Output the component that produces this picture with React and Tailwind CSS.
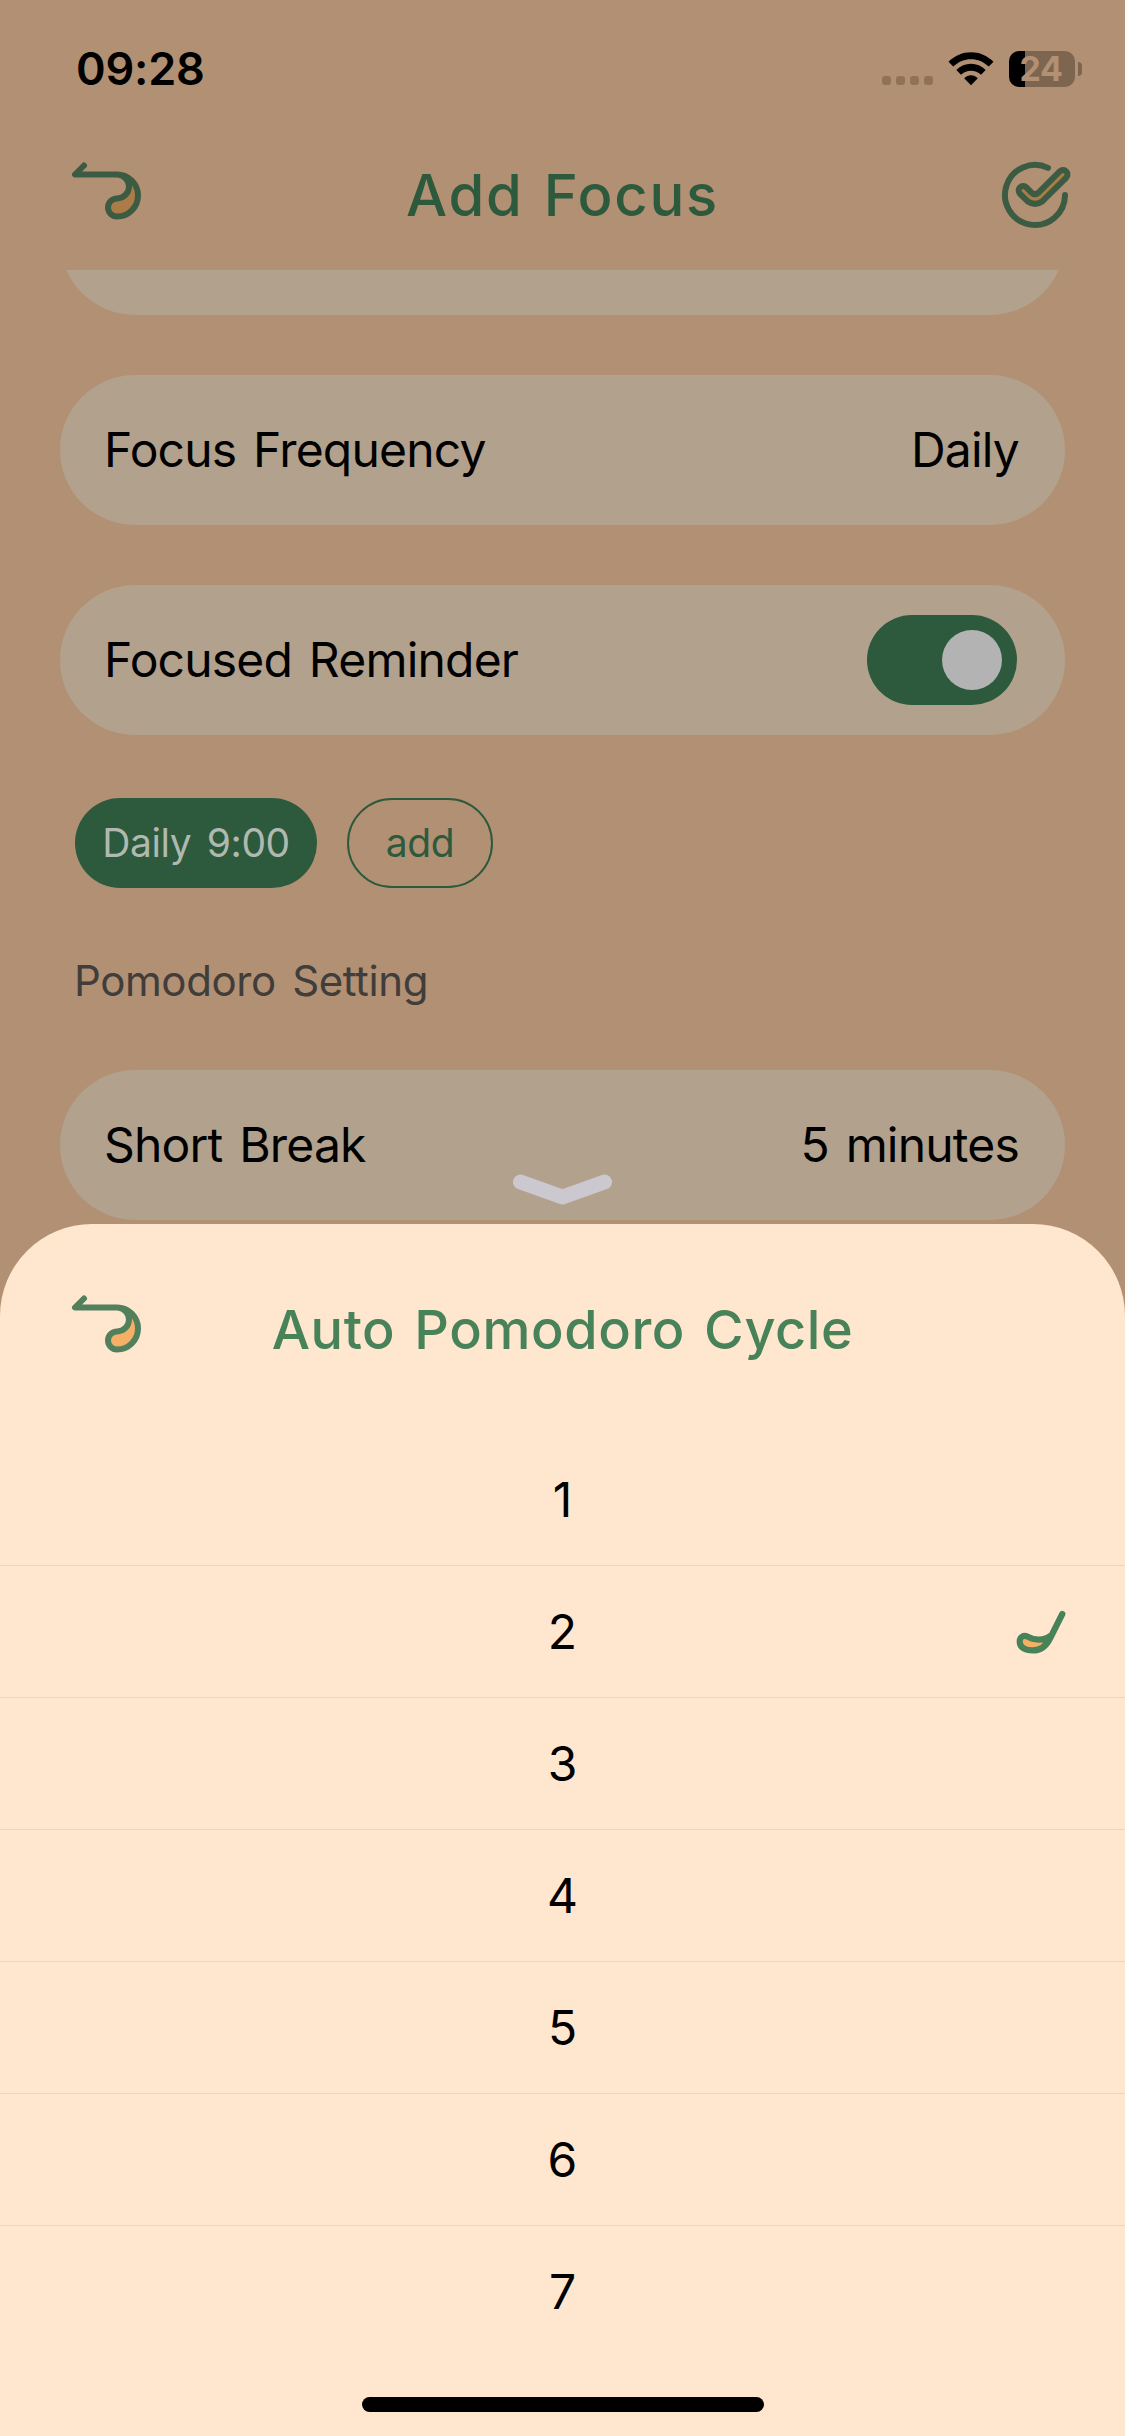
const CYCLES = [1, 2, 3, 4, 5, 6, 7];

function BackIcon({ stroke = '#52805c', fill = '#f5b066' }) {
  return (
    <svg className="h-[60px] w-[72px]" viewBox="0 0 72 60" fill="none">
      <path d="M47 13.5A21 21 0 0 1 47 55.5A9 9 0 0 1 47 37.5A12 12 0 0 0 47 13.5Z" fill={fill} />
      <path
        d="M14 4.5L5 13.5H47A21 21 0 0 1 47 55.5A9 9 0 0 1 47 37.5A12 12 0 0 0 47 13.5"
        stroke={stroke}
        strokeWidth="6"
        strokeLinecap="round"
        strokeLinejoin="round"
      />
    </svg>
  );
}

function ConfirmIcon() {
  return (
    <svg className="-mt-[2px] size-[72px]" viewBox="0 0 72 72" fill="none" stroke="#3b5c43" strokeWidth="6" strokeLinecap="round" strokeLinejoin="round">
      <path d="M66 36A30 30 0 1 1 49 8.9" />
      <path
        d="M61 12.2A4.5 4.5 0 0 1 67.3 18.6L43.5 42.2Q36 47.5 28.5 42.2L21 34.8A4.5 4.5 0 0 1 27.4 28.4L32 33.2Q36 37 40 33.2Z"
        fill="#ac7c48"
      />
    </svg>
  );
}

function SelectedIcon() {
  return (
    <svg className="h-[48px] w-[54px]" viewBox="0 0 54 48" fill="none">
      <path
        d="M48.3 6L36 30.5C32 38.5 27 42.4 19 42.4C10 42.4 5.7 39 5.7 33.5C5.7 29 9.5 27 13 28.4C20 32.5 30 33 37 27.5"
        fill="#f5b066"
        stroke="#478259"
        strokeWidth="6.2"
        strokeLinecap="round"
        strokeLinejoin="round"
      />
    </svg>
  );
}

function StatusBar() {
  return (
    <div className="flex h-[138px] items-center justify-between pr-[43px] pl-[76px]">
      <span className="text-[45px] font-semibold tracking-[-0.2px]">09:28</span>
      <div className="flex h-[36px] items-center">
        <div className="mt-[23px] flex gap-[5px]">
          {[0, 1, 2, 3].map((dot) => (
            <span key={dot} className="size-[9px] rounded-[3px] bg-[#917354]" />
          ))}
        </div>
        <svg className="ml-[15px] h-[34px] w-[46px]" viewBox="0 0 46 34">
          <path d="M0.5 9.8C13 -3 33 -3 45.5 9.8L40.8 14.6C30.5 4.8 15.5 4.8 5.2 14.6Z" />
          <path d="M8.3 18C16.5 9.7 29.5 9.7 37.7 18L33 22.7C27.3 17.3 18.7 17.3 13 22.7Z" />
          <path d="M16.2 26.2C20 22.3 26 22.3 29.8 26.2L23 33.2Z" />
        </svg>
        <div className="ml-[15px] flex h-[36px] w-[66px] items-center justify-center rounded-[10px] bg-linear-to-r from-black from-[16px] to-[#7d6550] to-[16px] pr-[2px] text-[34px] leading-[36px] font-bold tracking-[-0.5px] text-[#b29073]">
          24
        </div>
        <div className="ml-[3px] h-[14px] w-[4px] rounded-r-full bg-[#7d6550]" />
      </div>
    </div>
  );
}

function SettingCard({ label, children }) {
  return (
    <div className="mx-[60px] flex h-[150px] items-center justify-between rounded-full bg-[#b2a18d] pr-[46px] pl-[44px] text-[48px] tracking-[-0.8px] text-black [word-spacing:4px]">
      <span>{label}</span>
      {children}
    </div>
  );
}

function FocusScreen() {
  return (
    <div className="h-[1224px] text-black">
      <StatusBar />
      <header className="flex h-[132px] items-center justify-between px-[54px] pb-[17px]">
        <div className="mb-[10px] ml-[16px] w-[72px]">
          <BackIcon stroke="#3b5c43" fill="#ac7c48" />
        </div>
        <h1 className="mr-[16px] text-[58px] font-medium tracking-[1.7px] text-[#2d5a3d] [word-spacing:3px]">Add Focus</h1>
        <ConfirmIcon />
      </header>

      <div className="h-[45px] overflow-hidden">
        <div className="-mt-[105px]">
          <SettingCard />
        </div>
      </div>

      <div className="mt-[60px] flex flex-col gap-[60px]">
        <SettingCard label="Focus Frequency">
          <span>Daily</span>
        </SettingCard>
        <SettingCard label="Focused Reminder">
          <div className="mr-[2px] flex h-[90px] w-[150px] items-center justify-end rounded-full bg-[#2d5a3d] pr-[15px]">
            <div className="size-[60px] rounded-full bg-[#b3b3b3]" />
          </div>
        </SettingCard>
      </div>

      <div className="mt-[63px] flex gap-[30px] pl-[75px] text-[39px] tracking-[-0.4px] [word-spacing:5px]">
        <span className="flex h-[90px] w-[242px] items-center justify-center rounded-full bg-[#2d5a3d] text-[#b0b9b0]">Daily 9:00</span>
        <span className="flex h-[90px] w-[146px] items-center justify-center rounded-full border-2 border-[#2d5a3d] text-[#2d5a3d]">add</span>
      </div>

      <p className="mt-[63px] mb-[59px] pl-[74px] text-[42px] leading-[60px] tracking-[-0.4px] text-[#403d3a] [word-spacing:5px]">Pomodoro Setting</p>

      <SettingCard label="Short Break">
        <span>5 minutes</span>
      </SettingCard>
    </div>
  );
}

function CycleSheet() {
  return (
    <section className="h-[1212px] rounded-t-[92px] bg-[#ffe6cf] text-black">
      <header className="grid h-[210px] grid-cols-[72px_1fr_72px] items-center px-[70px]">
        <div className="-mt-[11px]">
          <BackIcon />
        </div>
        <h2 className="text-center text-[54px] font-medium tracking-[0.6px] text-[#478259] [word-spacing:4px]">Auto Pomodoro Cycle</h2>
      </header>
      <ul>
        {CYCLES.map((cycle) => (
          <li key={cycle} className="grid h-[132px] grid-cols-[1fr_auto_1fr] items-center border-b border-[#fbd0ab] text-[48px] last:border-b-0">
            <span />
            <span>{cycle}</span>
            {cycle === 2 && (
              <span className="justify-self-end pr-[57px]">
                <SelectedIcon />
              </span>
            )}
          </li>
        ))}
      </ul>
      <div className="mx-auto mt-[39px] h-[15px] w-[402px] rounded-full bg-black" />
    </section>
  );
}

export default function App() {
  return (
    <main className="relative h-[2436px] w-[1125px] overflow-hidden bg-[#b29073] font-['Inter','Liberation_Sans',sans-serif]">
      <FocusScreen />
      <svg className="absolute top-[1174px] left-[513px] h-[31px] w-[99px]" viewBox="0 0 99 31" fill="none">
        <path d="M7.5 8L49.5 23L91.5 8" stroke="#cbc8cf" strokeWidth="15" strokeLinecap="round" strokeLinejoin="round" />
      </svg>
      <CycleSheet />
    </main>
  );
}
